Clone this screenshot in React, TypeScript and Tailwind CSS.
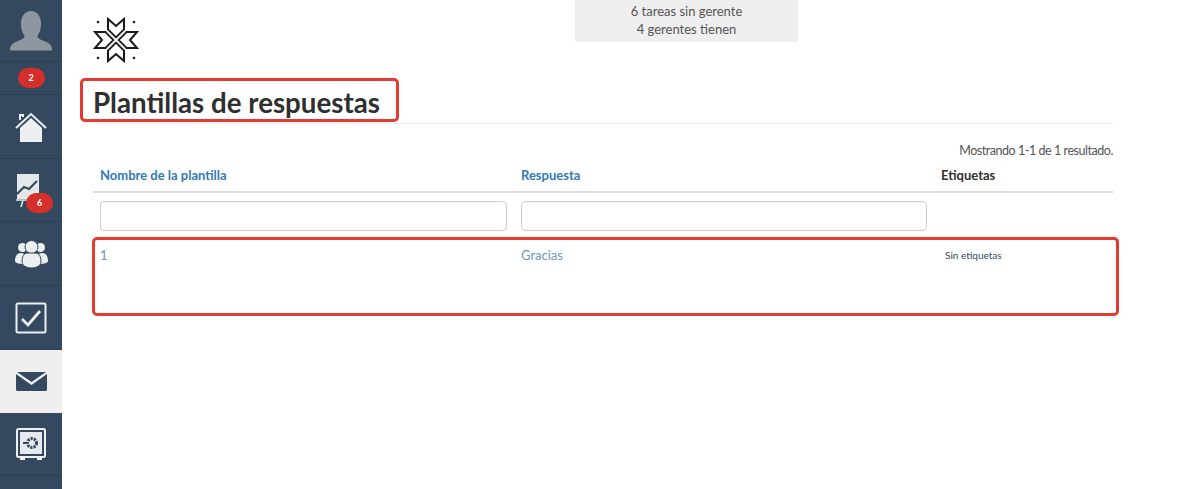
const font = "font-['Lato','Open_Sans',sans-serif]";

function NavRow({ h, active, children }: { h: string; active?: boolean; children: React.ReactNode }) {
  return (
    <div className={`${h} relative flex items-center justify-center ${active ? 'bg-[#efefef]' : 'border-b border-[#2c3e54]'}`}>
      {children}
    </div>
  );
}

function Badge({ n }: { n: number }) {
  return (
    <span className="flex h-[20px] w-[27px] items-center justify-center rounded-full bg-[#d42f2b] text-[9px] font-bold text-white">
      {n}
    </span>
  );
}

function Logo() {
  const arm = 'M15 13V2L23 9L31 2V13';
  return (
    <svg width="46" height="46" viewBox="0 0 46 46" fill="none" stroke="#1b1b1b" strokeWidth="2">
      <path d={arm} />
      <path d={arm} transform="rotate(90 23 23)" />
      <path d={arm} transform="rotate(180 23 23)" />
      <path d={arm} transform="rotate(270 23 23)" />
      <path d="M14 14L32 32M32 14L14 32" strokeWidth="5.500" />
      <path d="M14 14L32 32M32 14L14 32" stroke="#fff" strokeWidth="1.800" />
      <g fill="#1b1b1b" stroke="none">
        <circle cx="5" cy="5" r="1.300" />
        <circle cx="41" cy="5" r="1.300" />
        <circle cx="5" cy="41" r="1.300" />
        <circle cx="41" cy="41" r="1.300" />
      </g>
    </svg>
  );
}

function Sidebar() {
  return (
    <aside className="flex w-[62px] shrink-0 flex-col bg-[#34495f]">
      <NavRow h="h-[62px]">
        <svg width="42" height="40" viewBox="0 0 42 40" fill="#8e969f">
          <path d="M0 39.500c0-6 3-7.500 8-9.500 5-2 6.500-3 6.500-5.500-2-2.500-3.500-6-3.500-12C11 5 15 0 21 0s10 5 10 12.500c0 6-1.500 9.500-3.500 12 0 2.500 1.500 3.500 6.500 5.500s8 3.500 8 9.500z" />
        </svg>
      </NavRow>
      <NavRow h="h-[33px]">
        <Badge n={2} />
      </NavRow>
      <NavRow h="h-[64px]">
        <svg width="32" height="32" viewBox="0 0 32 32">
          <path d="M5 17L16 7l11 10v14H5z" fill="#ecf0f1" />
          <path d="M1 17L16 3l15 14M5 9V4h3v2" fill="none" stroke="#ecf0f1" strokeWidth="2" />
        </svg>
      </NavRow>
      <NavRow h="h-[63px]">
        <svg className="mr-[7px]" width="24" height="33" viewBox="0 0 24 33">
          <path d="M1 0h22v25H1z" fill="#e4e8ea" />
          <path d="M1 20l7-7 5 2 8-8" fill="none" stroke="#34495f" strokeWidth="2.200" />
          <path d="M7 26l-2 7M0 26h24" fill="none" stroke="#dfe4e8" strokeWidth="1.600" />
        </svg>
        <span className="absolute left-[26px] top-[34px]">
          <Badge n={6} />
        </span>
      </NavRow>
      <NavRow h="h-[64px]">
        <svg width="33" height="28" viewBox="0 0 33 28" fill="#ecf0f1">
          <circle cx="7.500" cy="7.500" r="4.500" />
          <circle cx="25.500" cy="7.500" r="4.500" />
          <path d="M0 21c0-5 2-8 6-8 2 0 3 1 3 1-1 3-1 7-1 10-4 0-8-1-8-3zM33 21c0-5-2-8-6-8-2 0-3 1-3 1 1 3 1 7 1 10 4 0 8-1 8-3z" />
          <circle cx="16.500" cy="7" r="6.500" stroke="#34495f" />
          <path d="M7 22c0-6 2-9 6-9h7c4 0 6 3 6 9 0 3-4 6-9.500 6S7 25 7 22z" stroke="#34495f" />
        </svg>
      </NavRow>
      <NavRow h="h-[64px]">
        <svg width="32" height="32" viewBox="0 0 32 32" fill="none" stroke="#ecf0f1">
          <rect x="1.500" y="1.500" width="29" height="29" rx="1.500" strokeWidth="2" />
          <path d="M7 17l6 6 12-14" strokeWidth="2.800" />
        </svg>
      </NavRow>
      <NavRow h="h-[63px]" active>
        <svg width="31" height="19" viewBox="0 0 31 19" fill="#34495f">
          <path d="M1 0h29L15.500 10z" />
          <path d="M0 2l15.500 11L31 2v15.500a1.500 1.500 0 0 1-1.500 1.500h-28A1.500 1.500 0 0 1 0 17.500z" />
        </svg>
      </NavRow>
      <NavRow h="h-[63px]">
        <svg width="30" height="32" viewBox="0 0 30 32" fill="none" stroke="#ecf0f1">
          <rect x="1" y="1" width="28" height="28" rx="1.500" strokeWidth="2" />
          <rect x="4" y="4" width="22" height="22" fill="#e6eaee" stroke="none" />
          <circle cx="16" cy="15" r="4.500" stroke="#34495f" strokeWidth="3" strokeDasharray="2.200 1" />
          <path d="M7 15h3" stroke="#34495f" strokeWidth="2" />
          <path d="M4 31h5M21 31h5" strokeWidth="2" />
        </svg>
      </NavRow>
      <div className="flex-1" />
    </aside>
  );
}

export default function App() {
  return (
    <div className={`relative flex h-[489px] w-[1200px] overflow-hidden bg-white text-[#333] ${font}`}>
      <Sidebar />
      <main className="flex-1 pl-[31px] pr-[87px]">
        <div className="flex h-[81px] items-start">
          <div className="mt-[17px] w-[45px]">
            <Logo />
          </div>
          <div className="ml-[437px] h-[42px] w-[223px] bg-[#efefef] pt-[2px] text-center text-[13px] leading-[18px] text-[#555]">
            <p>6 tareas sin gerente</p>
            <p>4 gerentes tienen</p>
          </div>
        </div>
        <h1 className="h-[43px] border-b border-[#eee] pt-[1px] text-[27.7px] font-bold leading-[42px] text-[#2f2f2f]">
          Plantillas de respuestas
        </h1>
        <p className="mt-[18px] text-right text-[12.5px] leading-[18px] tracking-[-0.45px] text-[#555]">
          Mostrando 1-1 de 1 resultado.
        </p>
        <div className="-mt-[1px] grid grid-cols-[421px_420px_178px] border-b-2 border-[#ddd] text-[13px] font-bold leading-[18px]">
          <span className="px-[7px] py-[7px] text-[#337ab7]">Nombre de la plantilla</span>
          <span className="px-[7px] py-[7px] text-[#337ab7]">Respuesta</span>
          <span className="px-[7px] py-[7px] text-[#2f2f2f]">Etiquetas</span>
        </div>
        <div className="grid grid-cols-[421px_420px_178px] pt-[8px]">
          <div className="px-[7px]">
            <input className="block h-[30px] w-[407px] rounded-[4px] border border-[#ccc]" />
          </div>
          <div className="px-[7px]">
            <input className="block h-[30px] w-[406px] rounded-[4px] border border-[#ccc]" />
          </div>
        </div>
        <div className="grid grid-cols-[421px_420px_178px] items-start pt-[15px] text-[13px] leading-[18px]">
          <span className="px-[7px] text-[#7a8fa6]">1</span>
          <a className="px-[7px] text-[#6d95bf]">Gracias</a>
          <span className="px-[11px] text-[10px] text-[#34495f]">Sin etiquetas</span>
        </div>
      </main>

      {/* Annotation frames drawn over the screenshot */}
      <div className="absolute left-[80px] top-[78px] h-[44px] w-[319px] rounded-[5px] border-[3px] border-[#e53a30]" />
      <div className="absolute left-[92px] top-[237px] h-[79px] w-[1027px] rounded-[5px] border-[3px] border-[#e53a30]" />
    </div>
  );
}
